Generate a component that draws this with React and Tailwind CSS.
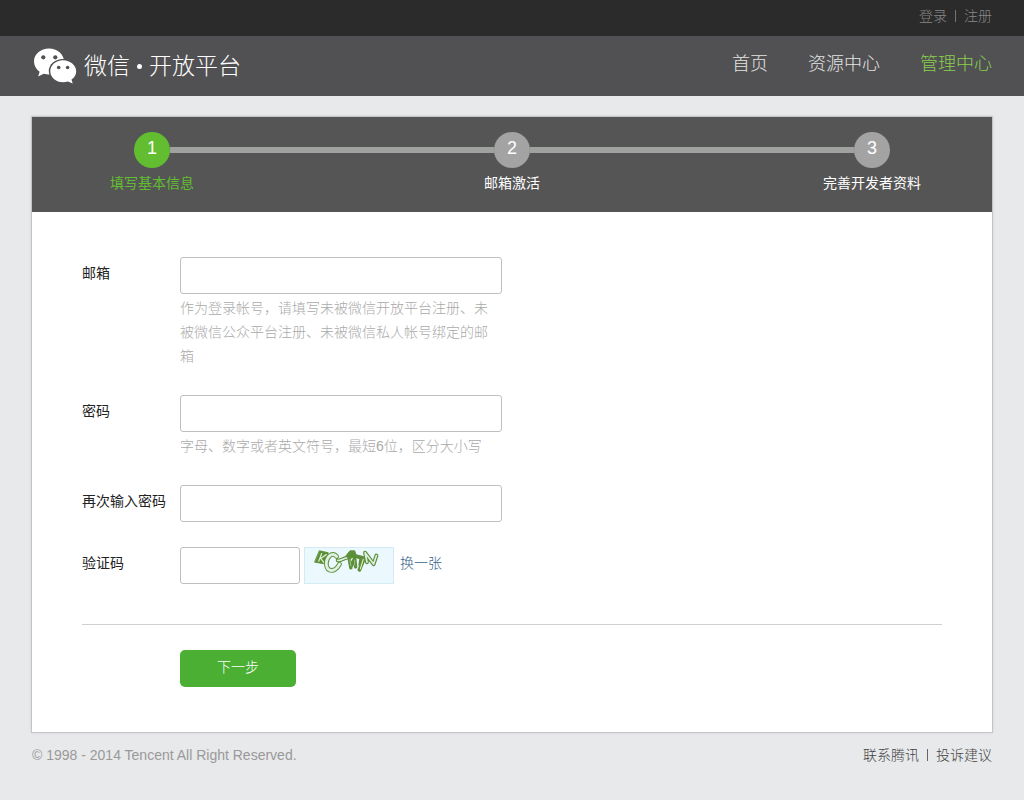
import { useState } from 'react';

const steps = ['填写基本信息', '邮箱激活', '完善开发者资料'];

const navItems = [
  { href: '#home', label: '首页' },
  { href: '#resources', label: '资源中心' },
  { href: '#manage', label: '管理中心' },
];

const inputClass =
  'h-[37px] rounded-[3px] border border-[#bfbfbf] bg-white px-2.5 outline-none focus:border-[#8f8f8f]';

const Logo = () => (
  <svg width="43" height="36" viewBox="0 0 43 36" fill="#fff" aria-hidden="true">
    <path d="M15 0.500C6.700 0.500 0 6.200 0 13.400c0 4.200 2.200 7.900 5.600 10.300L4.200 28.600l5.500-2.900c1.700.6 3.500.8 5.300.8 8.300 0 15-5.800 15-13S23.300 0.500 15 0.500z" />
    <ellipse cx="28.800" cy="23" rx="14" ry="12" fill="#515153" />
    <path d="M29 12.200c-7.300 0-12.700 5-12.700 11s5.400 11 12.700 11c1.800 0 3.500-.3 5-.8l4.700 2.200-1.200-4c2.900-2 4.700-5 4.700-8.400 0-6-5.900-11-13.200-11z" />
    <g fill="#515153">
      <circle cx="9.300" cy="9.300" r="2.100" />
      <circle cx="21.300" cy="9.300" r="2.100" />
      <circle cx="24.700" cy="19.500" r="1.800" />
      <circle cx="33.600" cy="19.500" r="1.800" />
    </g>
  </svg>
);

// distorted letters of the verification picture
const Captcha = () => (
  <svg
    className="border border-[#d3ecf3] bg-[#ebf8fe]"
    width="90"
    height="37"
    viewBox="0 0 90 37"
    fill="none"
    stroke="#5c8f38"
    strokeLinecap="round"
    strokeLinejoin="round"
    role="img"
    aria-label="验证码"
  >
    <path d="M14 3l9 2-2 12-12-2z" fill="#5c8f38" strokeWidth="1" />
    <path d="M16 6l-3 8M21 7l-6 4 4 5" stroke="#dcefd2" strokeWidth="1.300" />
    <path d="M32 9c-5-6-11 1-11 8 1 9 9 9 14 0" strokeWidth="5" />
    <path d="M32 9c-5-6-11 1-11 8 1 9 9 9 14 0" stroke="#dff0e2" strokeWidth="3" />
    <path d="M33 13c4 1 6-3 12-3" strokeWidth="4" />
    <path d="M33 13c4 1 6-3 12-3" stroke="#dff0e2" strokeWidth="1.600" />
    <path d="M42 8l4-5h5l2 6-7 2z" fill="#5c8f38" strokeWidth="1" />
    <path d="M45 10l2 11M47 20l4-9 1 9" strokeWidth="3.600" />
    <path d="M46 12l1 7M51 13l0 5" stroke="#a6c88f" strokeWidth="1" />
    <path d="M50 8l11 3-5 12M58 10l-1 8" strokeWidth="4" />
    <path d="M60 12l-3 10" stroke="#dcefd2" strokeWidth="1.200" />
    <path d="M64 15l-2-10 9 12 3-9" strokeWidth="4.200" />
    <path d="M64 15l-2-10 9 12 3-9" stroke="#dff0e2" strokeWidth="1.800" />
  </svg>
);

const Separator = () => <span className="mx-2 h-3 w-px bg-current opacity-80" />;

const Field = ({ id, label, help, children }) => (
  <div className="flex items-start">
    <label htmlFor={id} className="w-[98px] shrink-0 pt-1 font-normal text-[#222]">
      {label}
    </label>
    <div>
      {children}
      {help && <p className="w-[312px] py-0.5 text-[#aaa]">{help}</p>}
    </div>
  </div>
);

const App = () => {
  const [form, setForm] = useState({ email: '', password: '', confirm: '', code: '' });
  const current = 0;

  const bind = (name) => ({
    id: name,
    name,
    value: form[name],
    onChange: (event) => setForm({ ...form, [name]: event.target.value }),
  });

  return (
    <div className="min-h-screen bg-[#e8e9eb] font-['Liberation_Sans','Noto_Sans_CJK_SC',sans-serif] text-sm leading-6 font-light">
      <div className="flex h-9 items-center justify-end bg-[#2b2b2b] px-8 pb-1 text-[#888]">
        <a href="#login">登录</a>
        <Separator />
        <a href="#register">注册</a>
      </div>

      <header className="flex h-[60px] items-center justify-between bg-[#515153] px-8">
        <h1 className="flex items-center gap-[7px] pl-0.5 text-[23px] text-white">
          <Logo />
          <span className="flex items-center gap-[7px]">
            微信
            <span className="size-[5px] rounded-full bg-white" />
            开放平台
          </span>
        </h1>
        <nav className="flex gap-10 pb-1 text-lg">
          {navItems.map((item) => (
            <a
              key={item.href}
              href={item.href}
              className={item.href === '#manage' ? 'text-[#8bcf4e]' : 'text-[#e4e4e4]'}
            >
              {item.label}
            </a>
          ))}
        </nav>
      </header>

      <main className="mx-8 mt-[21px] bg-white shadow-[0_0_0_1px_#c3c5c6,0_0_3px_#b5b7b8]">
        <div className="h-[95px] bg-[#555] pt-[15px]">
          <div className="flex items-center px-[calc(12.5%-18px)]">
            {steps.map((step, index) => (
              <div key={step} className={index > 0 ? 'flex flex-1 items-center' : 'flex items-center'}>
                {index > 0 && <div className="h-1.5 flex-1 bg-[#a0a2a0]" />}
                <div
                  className={`size-9 rounded-full text-center text-lg leading-8 text-white ${
                    index === current ? 'bg-[#63bd30]' : 'bg-[#a3a3a3]'
                  }`}
                >
                  {index + 1}
                </div>
              </div>
            ))}
          </div>
          <ol className="flex justify-between pt-[3px] font-normal">
            {steps.map((step, index) => (
              <li
                key={step}
                className={`w-1/4 text-center ${index === current ? 'text-[#63bd30]' : 'text-white'}`}
              >
                {step}
              </li>
            ))}
          </ol>
        </div>

        <form className="px-[50px] py-[45px]" onSubmit={(event) => event.preventDefault()}>
          <div className="flex flex-col gap-[25px]">
            <Field
              id="email"
              label="邮箱"
              help="作为登录帐号，请填写未被微信开放平台注册、未被微信公众平台注册、未被微信私人帐号绑定的邮箱"
            >
              <input type="email" className={`block w-[322px] ${inputClass}`} {...bind('email')} />
            </Field>
            <Field id="password" label="密码" help="字母、数字或者英文符号，最短6位，区分大小写">
              <input type="password" className={`block w-[322px] ${inputClass}`} {...bind('password')} />
            </Field>
            <Field id="confirm" label="再次输入密码">
              <input type="password" className={`block w-[322px] ${inputClass}`} {...bind('confirm')} />
            </Field>
            <Field id="code" label="验证码">
              <div className="flex items-start gap-1">
                <input type="text" className={`w-[120px] ${inputClass}`} {...bind('code')} />
                <Captcha />
                <a href="#refresh" className="pt-1 pl-0.5 text-[#36648b]">
                  换一张
                </a>
              </div>
            </Field>
          </div>
          <hr className="mt-10 border-[#d0d0d0]" />
          <button
            type="submit"
            className="mt-[25px] ml-[98px] block h-[37px] w-[116px] rounded-[5px] bg-[#4aaf33] pb-1 text-white"
          >
            下一步
          </button>
        </form>
      </main>

      <footer className="mx-8 flex justify-between py-[11px] text-[#999]">
        <p>© 1998 - 2014 Tencent All Right Reserved.</p>
        <div className="flex items-center text-[#444]">
          <a href="#contact">联系腾讯</a>
          <Separator />
          <a href="#feedback">投诉建议</a>
        </div>
      </footer>
    </div>
  );
};

export default App;
